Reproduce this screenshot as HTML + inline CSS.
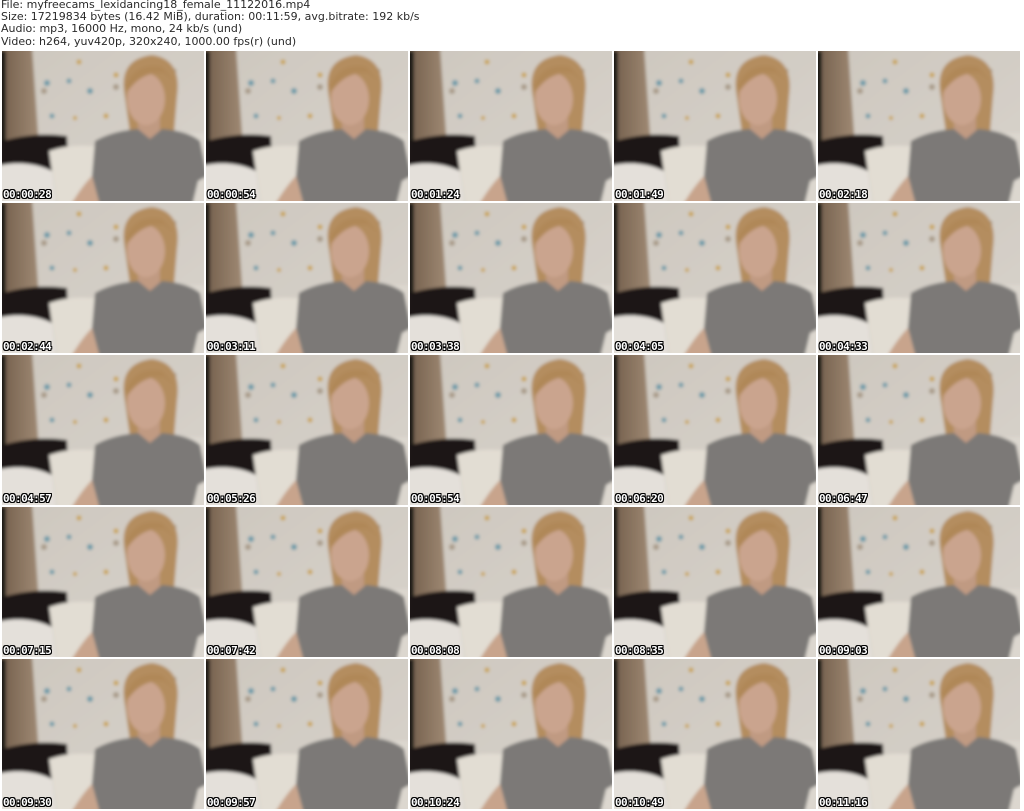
<!DOCTYPE html>
<html><head><meta charset="utf-8"><style>
html,body{margin:0;padding:0;background:#fff;width:1024px;height:811px;overflow:hidden;position:relative}
.hdr{position:absolute;left:1px;top:-1px;font:11px/12.2px "DejaVu Sans","Liberation Sans",sans-serif;color:#2a2a2a;white-space:pre}
.t{position:absolute;width:202px;height:150px;overflow:hidden}
.t svg{display:block}
.l{position:absolute;left:1px;bottom:1px;font:bold 11px/10px "DejaVu Sans Mono","Liberation Mono",monospace;color:#fff;letter-spacing:-0.6px;
text-shadow:1px 0 #000,-1px 0 #000,0 1px #000,0 -1px #000,1px 1px #000,-1px -1px #000,1px -1px #000,-1px 1px #000}
</style></head><body>
<div class="hdr">File: myfreecams_lexidancing18_female_11122016.mp4
Size: 17219834 bytes (16.42 MiB), duration: 00:11:59, avg.bitrate: 192 kb/s
Audio: mp3, 16000 Hz, mono, 24 kb/s (und)
Video: h264, yuv420p, 320x240, 1000.00 fps(r) (und)</div>
<svg width="0" height="0" style="position:absolute">
<defs>
<filter id="bl"><feGaussianBlur stdDeviation="1.6"/></filter>
<linearGradient id="wall" x1="0" y1="0" x2="1" y2="1"><stop offset="0" stop-color="#cdc7be"/><stop offset="1" stop-color="#d8d3cc"/></linearGradient>
<linearGradient id="cur" x1="0" y1="0" x2="1" y2="0"><stop offset="0" stop-color="#6e5a48"/><stop offset="1" stop-color="#a08a74"/></linearGradient>
<symbol id="sc" viewBox="0 0 202 150">
<g filter="url(#bl)">
<rect x="-5" y="-5" width="212" height="160" fill="url(#wall)"/>
<path d="M-5 -5H30L37 95L8 100L-5 100Z" fill="url(#cur)"/>
<rect x="-5" y="0" width="9" height="155" fill="#1e1a18"/>
<rect x="170" y="82" width="40" height="70" fill="#dcd7cf"/>
<path d="M-5 92Q30 80 65 85L68 155H-5Z" fill="#1c1818"/>
<path d="M-5 115Q25 108 50 120L55 155H-5Z" fill="#e4e0da"/>
<path d="M47 100Q70 92 98 96L100 155H55Z" fill="#e2ddd3"/>
<g fill="#6a9aa8"><circle cx="45" cy="32" r="3"/><circle cx="88" cy="40" r="3"/><circle cx="67" cy="30" r="2.5"/><circle cx="50" cy="65" r="2.5"/></g>
<g fill="#c9a24a"><circle cx="77" cy="11" r="2.5"/><circle cx="114" cy="24" r="2.5"/><circle cx="104" cy="65" r="2.5"/><circle cx="73" cy="67" r="2"/></g>
<g fill="#a89a88"><circle cx="42" cy="40" r="3"/><circle cx="114" cy="36" r="3"/><circle cx="172" cy="20" r="2.5"/></g>
<path d="M122 40Q118 8 150 4Q180 8 175 45L172 82L128 82Z" fill="#b48d5e"/>
<rect x="136" y="66" width="22" height="22" fill="#c09a82"/>
<ellipse cx="144" cy="48" rx="19" ry="26" fill="#caa48e"/>
<path d="M123 35Q135 10 160 16L172 30L162 22Q140 20 126 40Z" fill="#b08858"/>
<path d="M93 90Q110 80 136 78L148 88L160 78Q186 80 198 90L205 125L196 130L190 155H98L90 125Z" fill="#7b7977"/>
<path d="M90 125L98 155H68Q80 135 90 125Z" fill="#c8a48c"/>
</g>
</symbol>
</defs>
</svg>
<div id="g"></div>
<script>
var L=["00:00:28","00:00:54","00:01:24","00:01:49","00:02:18","00:02:44","00:03:11","00:03:38","00:04:05","00:04:33","00:04:57","00:05:26","00:05:54","00:06:20","00:06:47","00:07:15","00:07:42","00:08:08","00:08:35","00:09:03","00:09:30","00:09:57","00:10:24","00:10:49","00:11:16"];
var h="";
for(var i=0;i<25;i++){var r=Math.floor(i/5),c=i%5;
h+='<div class="t" style="left:'+(2+c*204)+'px;top:'+(51+r*152)+'px"><svg width="202" height="150"><use href="#sc"/></svg><div class="l">'+L[i]+'</div></div>';}
document.getElementById("g").innerHTML=h;
</script>
</body></html>
